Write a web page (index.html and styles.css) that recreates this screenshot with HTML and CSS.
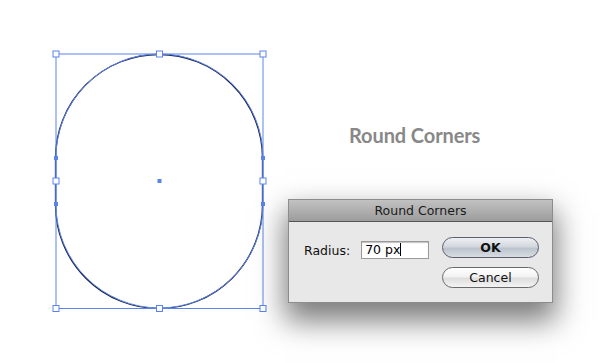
FILE: index.html
```html
<!DOCTYPE html>
<html lang="en">
<head>
    <meta charset="UTF-8">
    <title>Round Corners</title>
    <link rel="stylesheet" href="styles.css">
</head>
<body>
    <div class="page">
        <!-- artboard with the selected shape -->
        <svg class="artboard" width="280" height="363" viewBox="0 0 280 363">
            <rect x="55.5" y="54.5" width="207" height="254" rx="103.5" ry="103.5" fill="#fff" stroke="#1c2444" stroke-width="1.3"/>
            <rect x="56" y="54" width="207" height="254" rx="103.5" ry="103.5" fill="none" stroke="#5a84ea" stroke-width="1"/>
            <rect x="56" y="54" width="207" height="254.5" fill="none" stroke="#5a84ea" stroke-width="1"/>
            <g fill="#5a84ea">
                <rect x="54" y="156" width="4" height="4"/>
                <rect x="54" y="202" width="4" height="4"/>
                <rect x="261" y="156" width="4" height="4"/>
                <rect x="261" y="202" width="4" height="4"/>
                <rect x="157.5" y="179" width="4" height="4"/>
            </g>
            <g fill="#fff" stroke="#5a84ea" stroke-width="1">
                <rect x="53" y="51" width="6" height="6"/>
                <rect x="156.5" y="51" width="6" height="6"/>
                <rect x="260" y="51" width="6" height="6"/>
                <rect x="53" y="178" width="6" height="6"/>
                <rect x="260" y="178" width="6" height="6"/>
                <rect x="53" y="305.5" width="6" height="6"/>
                <rect x="156.5" y="305.5" width="6" height="6"/>
                <rect x="260" y="305.5" width="6" height="6"/>
            </g>
        </svg>

        <div class="side">
            <h2 class="caption">Round Corners</h2>

            <div class="dialog">
                <div class="dialog-title">Round Corners</div>
                <div class="dialog-body">
                    <div class="field">
                        <label for="radius">Radius:</label>
                        <div class="input">70 px<span class="caret"></span></div>
                    </div>
                    <div class="actions">
                        <button class="btn btn-default">OK</button>
                        <button class="btn">Cancel</button>
                    </div>
                </div>
            </div>
        </div>
    </div>
</body>
</html>
```

FILE: styles.css
```css
body {
    margin: 0;
    background: #ffffff;
    font-family: 'DejaVu Sans', sans-serif;
}

.page {
    width: 600px;
    height: 363px;
    display: flex;
    overflow: hidden;
}

.artboard {
    display: block;
    flex: none;
}

.side {
    padding-top: 122px;
}

.caption {
    margin: 0 0 51px 69px;
    font-family: 'Lato', sans-serif;
    font-weight: 700;
    font-size: 20px;
    line-height: 26px;
    letter-spacing: -0.1px;
    color: #888888;
}

/* Dialog */
.dialog {
    margin-left: 8px;
    width: 263px;
    border: 1px solid #8c8c8c;
    background: #e8e8e8;
    box-shadow: 0 15px 28px 3px rgba(0, 0, 0, 0.52);
}

.dialog-title {
    height: 21px;
    line-height: 21px;
    text-align: center;
    font-size: 12.5px;
    color: #1a1a1a;
    background: linear-gradient(#c2c2c2, #9c9c9c);
    border-bottom: 1px solid #555;
}

.dialog-body {
    display: flex;
    justify-content: space-between;
    padding: 15px 13px 14px 15px;
}

.field {
    display: flex;
    align-items: center;
    gap: 11px;
    margin-top: 4px;
    height: 18px;
    font-size: 12.5px;
    color: #111;
}

.input {
    width: 63px;
    height: 16px;
    line-height: 16px;
    padding-left: 3px;
    background: #fff;
    border: 1px solid #9a9a9a;
    box-shadow: inset 0 1px 1px rgba(0, 0, 0, 0.25);
    font-size: 12.5px;
    color: #000;
}

.caret {
    display: inline-block;
    width: 1px;
    height: 13px;
    background: #000;
    vertical-align: -2px;
}

.actions {
    display: flex;
    flex-direction: column;
    gap: 9px;
}

.btn {
    width: 97px;
    height: 21px;
    padding: 0;
    border: 1px solid #6a6a6a;
    border-radius: 11px;
    background: linear-gradient(#ffffff, #f2f2f2 45%, #dedede 55%, #f4f4f4);
    font-family: 'DejaVu Sans', sans-serif;
    font-size: 12.5px;
    color: #111;
}

.btn-default {
    border-color: #58606c;
    background: linear-gradient(#eef0f3, #d3d8de 45%, #bcc3cc 55%, #d9dde3);
    font-weight: 700;
}
```
